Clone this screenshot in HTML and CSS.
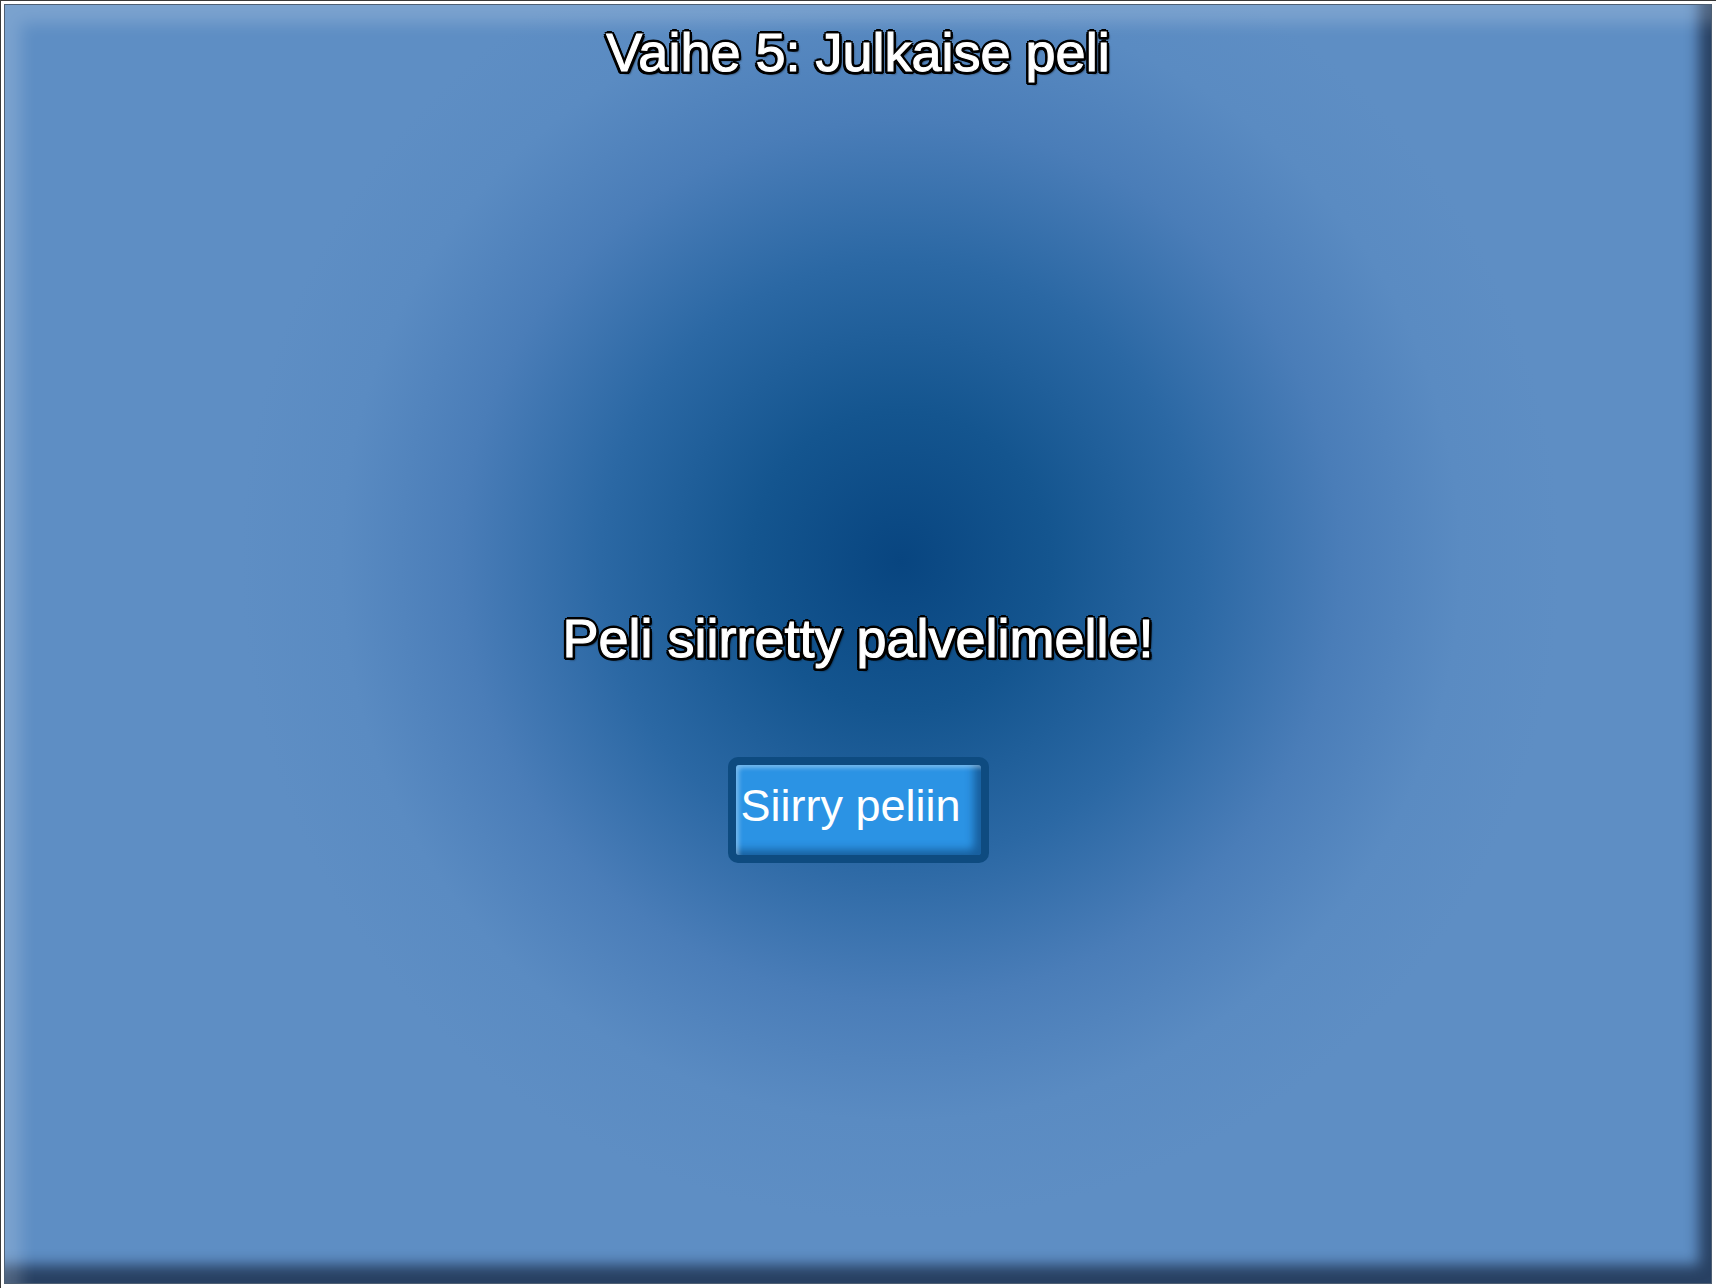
FILE: index.html
```html
<!DOCTYPE html>
<html lang="fi">
<head>
<meta charset="utf-8">
<title>Vaihe 5: Julkaise peli</title>
<link rel="stylesheet" href="styles.css">
</head>
<body>
<div class="frame">
  <div class="stage">
    <h1 class="title">Vaihe 5: Julkaise peli</h1>
    <p class="message">Peli siirretty palvelimelle!</p>
    <div class="btn-wrap">
      <button class="btn" type="button">Siirry peliin</button>
    </div>
  </div>
</div>
</body>
</html>
```

FILE: styles.css
```css
html, body {
  margin: 0;
  padding: 0;
  background: #ffffff;
}

.frame {
  width: 1712px;
  height: 1284px;
  border-top: 1px solid #3a3a3a;
  border-left: 1px solid #3a3a3a;
  padding: 3px 3px 0 3px;
  box-sizing: content-box;
}

.stage {
  box-sizing: border-box;
  width: 1708px;
  height: 1280px;
  border: 1px solid #4d5e72;
  background:
    radial-gradient(circle at 52.5% 43.5%, #084580 0px, #14558f 150px, #2b68a4 300px, #4a7db8 440px, #5a8bc2 560px, #5e8ec4 660px);
  box-shadow:
    inset 20px 22px 16px -4px rgba(255, 255, 255, 0.18),
    inset -16px -22px 14px -4px rgba(8, 18, 38, 0.62);
  display: flex;
  flex-direction: column;
  align-items: center;
  font-family: "Liberation Sans", Arial, sans-serif;
  color: #ffffff;
}

.title,
.message {
  margin: 0;
  font-size: 54px;
  font-weight: normal;
  line-height: 61px;
  color: #ffffff;
  -webkit-text-stroke: 1.1px #ffffff;
  text-shadow:
    2px 2px 0 #000, -2px -2px 0 #000, 2px -2px 0 #000, -2px 2px 0 #000,
    3px 0 0 #000, -3px 0 0 #000, 0 3px 0 #000, 0 -3px 0 #000,
    3px 2px 0 #000, -3px 2px 0 #000, 2px 3px 0 #000, -2px 3px 0 #000,
    3px 3px 2px rgba(0, 0, 0, 0.7);
}

.title {
  margin-top: 17px;
}

.message {
  margin-top: 525px;
}

.btn-wrap {
  margin-top: 88px;
  padding: 8px;
  background: #0e4b80;
  border-radius: 10px;
}

.btn {
  display: block;
  width: 245px;
  height: 90px;
  margin: 0;
  padding: 0 20px 8px 5px;
  border: none;
  border-radius: 3px;
  background: #2b93e4;
  box-shadow:
    inset 4px 4px 4px -1px rgba(255, 255, 255, 0.35),
    inset -9px -7px 8px -2px rgba(0, 30, 70, 0.45);
  font-family: "Liberation Sans", Arial, sans-serif;
  font-size: 45px;
  line-height: 82px;
  color: #ffffff;
  text-align: center;
  white-space: nowrap;
  box-sizing: border-box;
}
```
